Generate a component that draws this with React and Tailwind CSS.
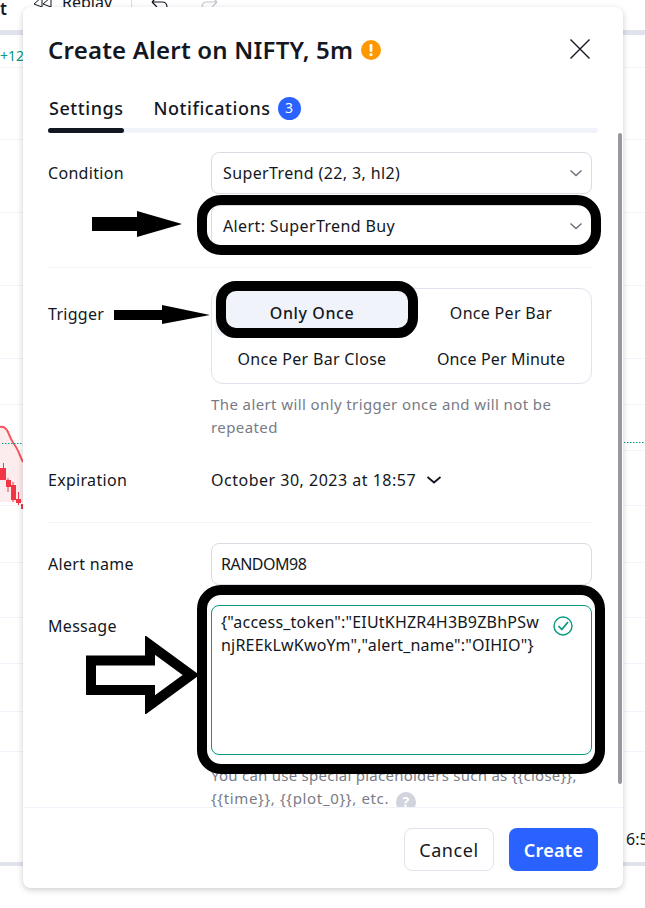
import React from "react";

const Chevron = () => (
  <svg width="14" height="10" viewBox="0 0 14 10" fill="none" stroke="#6a6d78" strokeWidth="1.4">
    <path d="M1.5 2.5 7 7.5 12.5 2.5" />
  </svg>
);

function Row({ label, children, className = "" }) {
  return (
    <div className={"flex " + className}>
      <div className="w-[163px] shrink-0 text-[16px] leading-6 tracking-[0.3px] text-[#131722]">{label}</div>
      <div className="w-[381px]">{children}</div>
    </div>
  );
}

function Select({ text }) {
  return (
    <div className="flex h-[42px] items-center justify-between rounded-lg border border-[#d9dbe3] bg-white pl-[11px] pr-[8px] text-[16px] tracking-[0.38px] text-[#131722]">
      <span>{text}</span>
      <Chevron />
    </div>
  );
}

function Background() {
  const lines = [67, 139, 212, 285, 358, 404, 450, 505, 562, 617, 663, 711, 751];
  return (
    <div className="absolute inset-0 overflow-hidden">
      {lines.map((y) => (
        <div key={y} className="absolute left-0 right-0 h-px bg-[#f0f3fa]" style={{ top: y }} />
      ))}
      <div className="absolute left-0 right-0 top-[30px] h-[5px] bg-[#e0e3eb]" />
      <div className="absolute left-0 right-0 top-[862px] h-[4px] bg-[#e0e3eb]" />
      <span className="absolute left-0 top-[-3px] text-[17px] font-semibold leading-6 text-[#131722]">t</span>
      <span className="absolute left-[62px] top-[-10px] text-[16px] leading-6 text-[#131722]">Replay</span>
      <svg className="absolute left-[32px] top-0" width="22" height="8" viewBox="0 0 22 8" fill="none" stroke="#131722">
        <path d="M2 4 10 -3V7ZM11 4 19 -3V7Z" />
      </svg>
      <div className="absolute left-[131px] top-0 h-[7px] w-px bg-[#d9dbe3]" />
      <svg className="absolute left-[150px] top-0" width="20" height="8" viewBox="0 0 20 8" fill="none" stroke="#131722" strokeWidth="1.2">
        <path d="M2 2 7 7M2 2 6 -2M2 2H12C15 2 17 4 17 7" />
      </svg>
      <svg className="absolute left-[199px] top-0" width="20" height="8" viewBox="0 0 20 8" fill="none" stroke="#c1c4cd" strokeWidth="1.2">
        <path d="M18 2 13 7M18 2 14 -2M18 2H8C5 2 3 4 3 7" />
      </svg>
      <span className="absolute left-0 top-[47px] text-[14px] leading-[18px] text-[#089981]">+12</span>
      <svg className="absolute left-0 top-[420px]" width="23" height="95" viewBox="0 0 23 95" fill="none">
        <path d="M0 7C4 6 6 8 8 12 10 17 11 20 14 24 18 29 20 36 23 42V82H0Z" fill="#fdeced" />
        <path d="M0 7C4 6 6 8 8 12 10 17 11 20 14 24 18 29 20 36 23 42" stroke="#f7525f" strokeWidth="2" />
        <path d="M2 23.5H3.5M5 23.5H6.5M8 23.5H9.5M11 23.5H12.5M14 23.5H15.5M17 23.5H18.5M20 23.5H21.5" stroke="#089981" />
        <path d="M0 48h6v12h-6zM6 60h5v7h-5zM11 65h5v15h-5zM16 79h5v4h-5zM21 84h2v5h-2z" fill="#f23645" />
        <path d="M3.5 43V60M8 58V72M13 62V82M18.5 72V85" stroke="#f23645" />
      </svg>
      <svg className="absolute left-[623px] top-[442px]" width="22" height="1" viewBox="0 0 22 1">
        <path d="M1 .5H2.5M4 .5H5.5M7 .5H8.5M10 .5H11.5M13 .5H14.5M16 .5H17.5M19 .5H20.5" stroke="#089981" />
      </svg>
      <span className="absolute left-[626px] top-[827px] text-[16px] leading-6 text-[#131722]">6:5</span>
    </div>
  );
}

function Annotations() {
  return (
    <>
      <div className="absolute left-[197px] top-[195px] h-[60px] w-[404px] rounded-[24px] border-[10px] border-black" />
      <div className="absolute left-[216px] top-[281px] h-[57px] w-[202px] rounded-[20px] border-[10px] border-black" />
      <div className="absolute left-[197px] top-[585px] h-[189px] w-[408px] rounded-[24px] border-[10px] border-black" />
      <svg className="absolute left-[92px] top-[210px]" width="92" height="28" viewBox="0 0 92 28">
        <path d="M0 7H45V1L90 14 45 27V21H0Z" fill="#000" />
      </svg>
      <svg className="absolute left-[114px] top-[304px]" width="98" height="22" viewBox="0 0 98 22">
        <path d="M0 6H48V1L96 11 48 20V16H0Z" fill="#000" />
      </svg>
      <svg className="absolute left-[86px] top-[636px]" width="114" height="78" viewBox="0 0 114 78">
        <path d="M5 24.5H64V9L105 39 64 69V54H5Z" fill="#fff" stroke="#000" strokeWidth="10" />
      </svg>
    </>
  );
}

export default function App() {
  return (
    <div className="relative h-[908px] w-[645px] overflow-hidden bg-white font-['Noto_Sans',sans-serif]">
      <Background />
      <div className="relative ml-[23px] mt-[7px] flex h-[881px] w-[600px] flex-col overflow-hidden rounded-lg bg-white shadow-[0_2px_6px_rgba(0,0,0,0.2)]">
        <div className="flex h-[89px] shrink-0 items-start justify-between pl-[25px] pr-[33px] pt-[27px]">
          <div className="flex items-center gap-[8px]">
            <span className="text-[24px] font-semibold leading-8 tracking-[0.2px] text-[#131722]">Create Alert on NIFTY, 5m</span>
            <svg width="20" height="20" viewBox="0 0 20 20">
              <circle cx="10" cy="10" r="10" fill="#ff9800" />
              <rect x="8.6" y="4" width="2.8" height="8" rx="1.2" fill="#fff" />
              <circle cx="10" cy="14.6" r="1.6" fill="#fff" />
            </svg>
          </div>
          <svg className="mt-[5px]" width="20" height="20" viewBox="0 0 20 20" fill="none" stroke="#131722" strokeWidth="1.4">
            <path d="M.5 .5 19.5 19.5M19.5 .5 .5 19.5" />
          </svg>
        </div>
        <div className="shrink-0 pl-[25px] pr-[25px]">
          <div className="flex gap-[30px] pl-px text-[18px] font-medium leading-6 tracking-[0.55px] text-[#131722]">
            <span>Settings</span>
            <span className="flex items-center gap-[7px]">
              Notifications
              <span className="flex h-[23px] w-[23px] items-center justify-center rounded-full bg-[#2962ff] text-[14px] font-normal tracking-normal text-white">3</span>
            </span>
          </div>
          <div className="mt-[8px] h-[5px] rounded-full bg-[#f0f3fa]">
            <div className="h-[5px] w-[76px] rounded-full bg-[#131722]" />
          </div>
        </div>

        <div className="relative flex-1 overflow-hidden pl-[25px] pr-[31px] pt-[19px]">
          <div className="absolute right-[1px] top-0 h-[651px] w-[4px] rounded-full bg-[#9598a1]" />
          <Row label={<div className="pt-[9px]">Condition</div>}>
            <Select text="SuperTrend (22, 3, hl2)" />
            <div className="mt-[11px]">
              <Select text="Alert: SuperTrend Buy" />
            </div>
          </Row>
          <div className="mt-[20px] h-px w-[544px] bg-[#f0f3fa]" />
          <Row label={<div className="pt-[14px]">Trigger</div>} className="mt-[20px]">
            <div className="grid h-[96px] grid-cols-[194px_182px] grid-rows-2 rounded-xl border border-[#e0e3eb] py-[1px] pl-[3px] text-[16px] tracking-[0.3px] text-[#131722]">
              <div className="flex items-center justify-center rounded-lg bg-[#f0f3fa] font-medium tracking-[0.6px]">Only Once</div>
              <div className="flex items-center justify-center pl-[2px]">Once Per Bar</div>
              <div className="flex items-center justify-center">Once Per Bar Close</div>
              <div className="flex items-center justify-center pl-[2px] tracking-[0.15px]">Once Per Minute</div>
            </div>
            <p className="mt-[9px] text-[15px] leading-[23px] tracking-[0.4px] text-[#787b86]">
              The alert will only trigger once and will not be repeated
            </p>
          </Row>
          <Row label="Expiration" className="mt-[29px]">
            <div className="flex items-center gap-[10px] text-[16px] leading-6 tracking-[0.5px] text-[#131722]">
              October 30, 2023 at 18:57
              <svg width="16" height="10" viewBox="0 0 16 10" fill="none" stroke="#131722" strokeWidth="1.8">
                <path d="M1.5 2 8 7.5 14.5 2" />
              </svg>
            </div>
          </Row>
          <div className="mt-[30px] h-px w-[544px] bg-[#f0f3fa]" />
          <Row label={<div className="pt-[9px]">Alert name</div>} className="mt-[20px]">
            <div className="flex h-[42px] items-center rounded-lg border border-[#d9dbe3] pl-[9px] text-[16px] tracking-[-0.5px] text-[#131722]">RANDOM98</div>
          </Row>
          <Row label={<div className="pt-[9px]">Message</div>} className="mt-[20px]">
            <div className="relative h-[150px] rounded-lg border border-[#089981] pl-[9px] pt-[5px] text-[16px] leading-[23px] tracking-[0.2px] text-[#131722]">
              <div>
                {'{"access_token":"EIUtKHZR4H3B9ZBhPSw'}
                <br />
                {'njREEkLwKwoYm","alert_name":"OIHIO"}'}
              </div>
              <svg className="absolute right-[18px] top-[10px]" width="20" height="20" viewBox="0 0 20 20" fill="none" stroke="#089981" strokeWidth="1.4">
                <circle cx="10" cy="10" r="9" />
                <path d="M5.5 10 8.8 13.5 15 6" strokeWidth="1.8" />
              </svg>
            </div>
            <p className="mt-[9px] text-[15px] leading-[23px] tracking-[0.25px] text-[#787b86]">
              You can use special placeholders such as {"{{close}}"},
              <br />
              <span className="tracking-[0.65px]">{"{{time}}"}, {"{{plot_0}}"}, etc.</span>
              <span className="ml-[7px] inline-flex h-5 w-5 items-center justify-center rounded-full bg-[#d1d4dc] align-[-3px] text-[14px] font-bold leading-none text-white">?</span>
            </p>
          </Row>
        </div>

        <div className="flex h-[81px] shrink-0 items-start justify-end gap-[15px] border-t border-[#f0f3fa] pr-[25px] pt-[20px] text-[18px]">
          <div className="flex h-[43px] w-[90px] items-center justify-center rounded-lg border border-[#e0e3eb] pt-px tracking-[0.6px] text-[#131722]">Cancel</div>
          <div className="flex h-[43px] w-[89px] items-center justify-center rounded-lg bg-[#2962ff] pt-px font-semibold tracking-[0.3px] text-white">Create</div>
        </div>
      </div>
      <Annotations />
    </div>
  );
}
